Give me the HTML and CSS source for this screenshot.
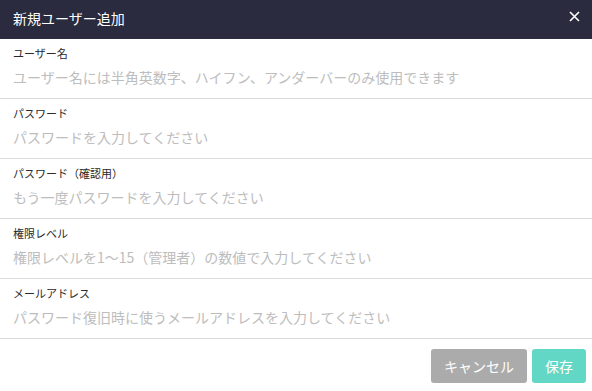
FILE: index.html
```html
<!DOCTYPE html>
<html>
<head>
    <meta charset="UTF-8">
    <title>新規ユーザー追加</title>
    <link rel="stylesheet" href="styles.css">
</head>
<body>
    <div class="modal">
        <div class="modal-header">
            <span class="modal-title">新規ユーザー追加</span>
            <button class="close-btn" aria-label="閉じる">
                <svg width="11" height="11" viewBox="0 0 11 11">
                    <path d="M1 1L10 10M10 1L1 10" stroke="#fff" stroke-width="1.6" fill="none"/>
                </svg>
            </button>
        </div>
        <div class="form-group">
            <label for="username">ユーザー名</label>
            <input type="text" id="username" placeholder="ユーザー名には半角英数字、ハイフン、アンダーバーのみ使用できます">
        </div>
        <div class="form-group">
            <label for="password">パスワード</label>
            <input type="password" id="password" placeholder="パスワードを入力してください">
        </div>
        <div class="form-group">
            <label for="password_confirm">パスワード（確認用）</label>
            <input type="password" id="password_confirm" placeholder="もう一度パスワードを入力してください">
        </div>
        <div class="form-group">
            <label for="level">権限レベル</label>
            <input type="text" id="level" placeholder="権限レベルを1～15（管理者）の数値で入力してください">
        </div>
        <div class="form-group">
            <label for="mail">メールアドレス</label>
            <input type="text" id="mail" placeholder="パスワード復旧時に使うメールアドレスを入力してください">
        </div>
        <div class="modal-footer">
            <button class="btn btn-cancel">キャンセル</button>
            <button class="btn btn-save">保存</button>
        </div>
    </div>
</body>
</html>
```

FILE: styles.css
```css
/* modal styling */
body {
    margin: 0;
    font-family: "Noto Sans CJK JP", "Noto Sans", sans-serif;
    background-color: #fff;
}

.modal {
    width: 592px;
}

.modal-header {
    height: 39px;
    background-color: #2a2b3e;
    display: flex;
    align-items: center;
    justify-content: space-between;
    padding: 0 13px;
    box-sizing: border-box;
}

.modal-title {
    color: #fff;
    font-size: 14px;
    line-height: 1;
    margin-top: -3px;
}

.close-btn {
    background: none;
    border: none;
    padding: 0;
    margin-right: -1px;
    margin-top: -6px;
    display: flex;
    cursor: pointer;
}

.form-group {
    height: 53px;
    border-bottom: 1px solid #dcdcdc;
    padding: 6px 13px 0;
    display: flex;
    flex-direction: column;
}

label {
    font-size: 11px;
    color: #2a2a2a;
    line-height: 16px;
}

input {
    border: none;
    outline: none;
    padding: 0;
    margin-top: 6px;
    font-family: inherit;
    font-size: 14px;
    line-height: 20px;
    color: #333;
}

input::placeholder {
    color: #bdbdbd;
}

.modal-footer {
    display: flex;
    justify-content: flex-end;
    gap: 5px;
    padding: 10px 6px 0;
}

.btn {
    height: 34px;
    border: none;
    border-radius: 3px;
    color: #fff;
    font-family: inherit;
    font-size: 14px;
    cursor: pointer;
}

.btn-cancel {
    width: 96px;
    background-color: #ababab;
}

.btn-save {
    width: 54px;
    background-color: #62d7c6;
}
```
